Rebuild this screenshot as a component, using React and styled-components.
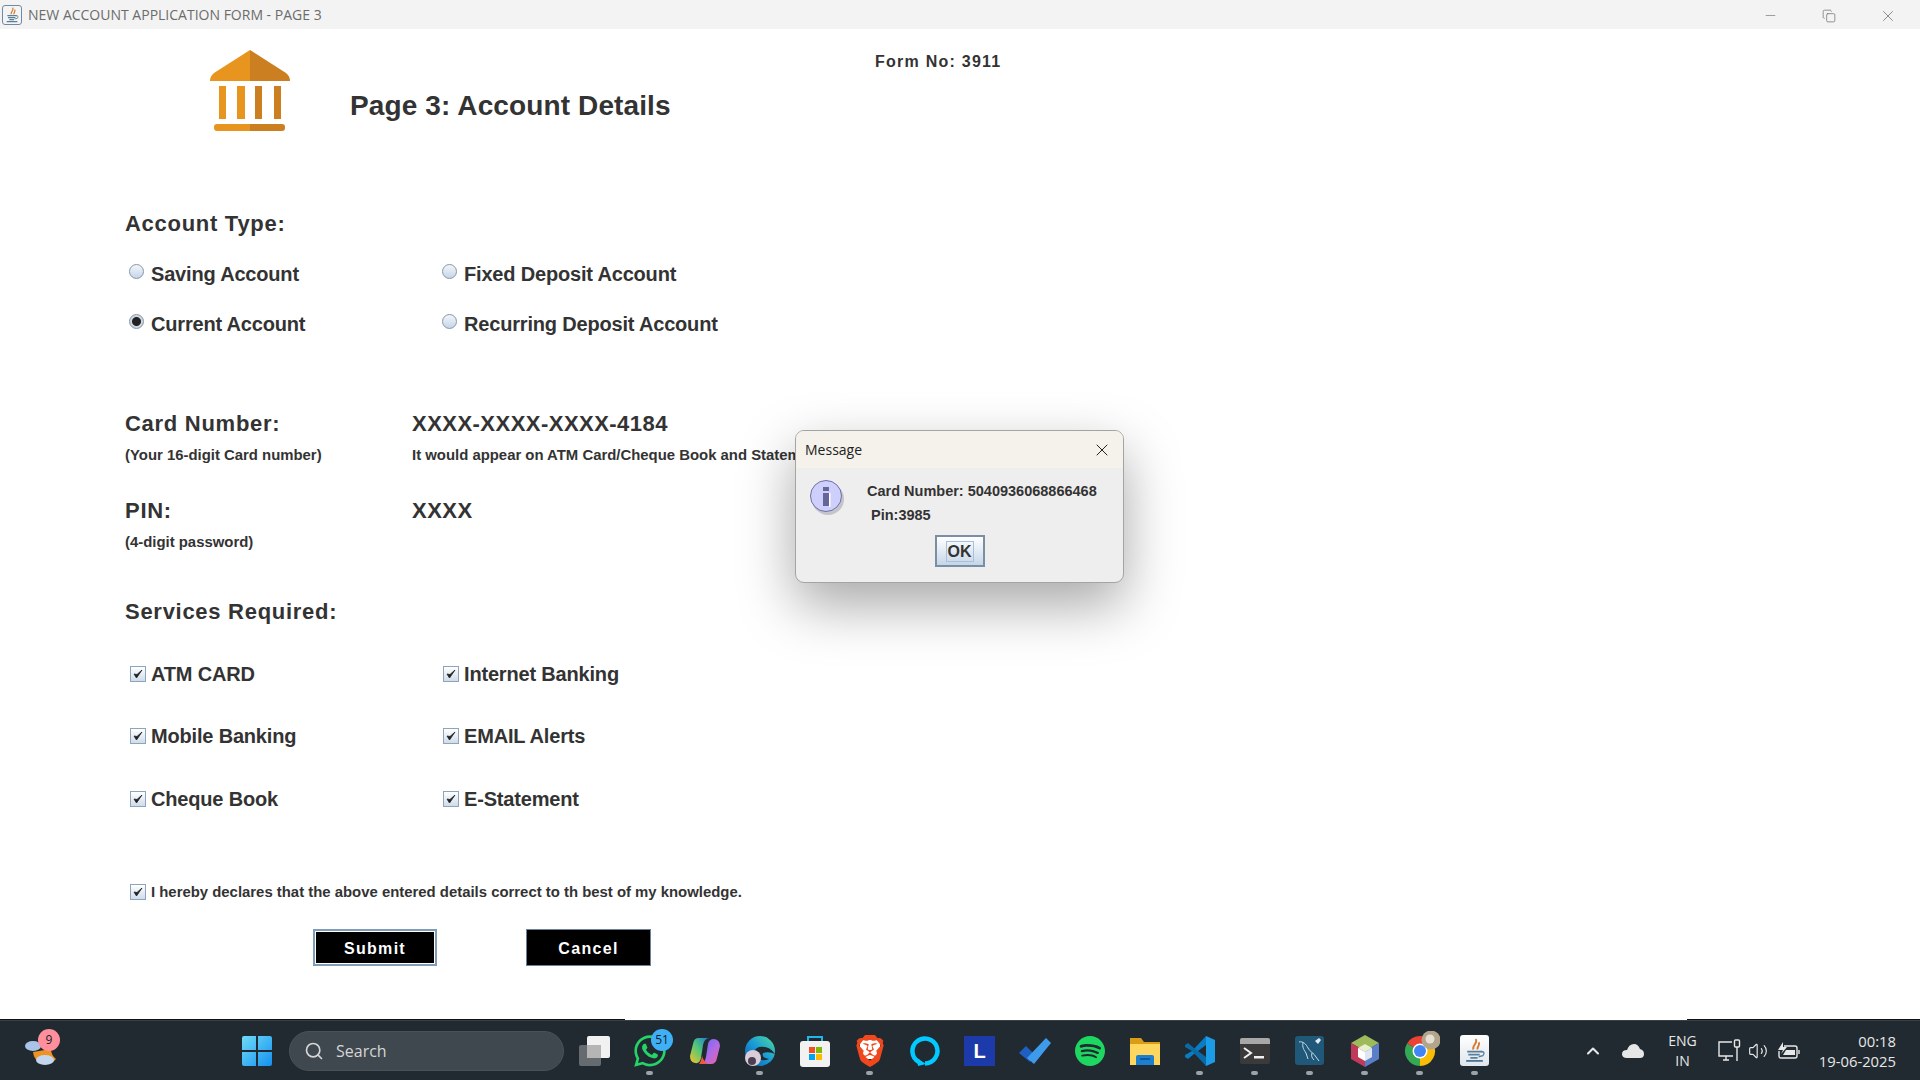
import styled, { createGlobalStyle } from "styled-components";
import { Search, Minus, Copy, X, ChevronUp, Volume2 } from "lucide-react";
import { FaWhatsapp } from "react-icons/fa";
import { SiBrave, SiSpotify } from "react-icons/si";

const GlobalStyle = createGlobalStyle`
  html, body {
    margin: 0;
    padding: 0;
    background: #ffffff;
  }
  * {
    box-sizing: border-box;
  }
`;

const Screen = styled.div`
  position: relative;
  width: 1920px;
  height: 1080px;
  display: flex;
  flex-direction: column;
  overflow: hidden;
  font-family: "Liberation Sans", Arial, sans-serif;
  color: #333333;
`;

const TitleBar = styled.div`
  height: 29px;
  flex: none;
  background: #f3f3f3;
  display: flex;
  align-items: center;
  padding-left: 2px;
  color: #6b6b6b;
  font-family: "Open Sans", sans-serif;
  font-size: 14px;
`;

const AppIcon = styled.span`
  width: 20px;
  height: 20px;
  margin-right: 6px;
  border: 1px solid #6f8aa3;
  border-radius: 3px;
  background: #f4f4f4;
  display: flex;
  align-items: center;
  justify-content: center;
`;

const WindowButtons = styled.div`
  margin-left: auto;
  padding-right: 3px;
  display: flex;
  align-items: center;
  color: #6a6a6a;
`;

const WindowButton = styled.span`
  width: 58.5px;
  padding-top: 2px;
  display: flex;
  justify-content: center;
`;

const Page = styled.div`
  flex: 1;
  background: linear-gradient(90deg, #111111 625px, transparent 625px, transparent 1687px, #111111 1687px) bottom / 100% 1px no-repeat #ffffff;
`;

const Header = styled.header`
  height: 150px;
  padding-left: 210px;
  display: grid;
  grid-template-columns: 140px 525px auto;
`;

const Logo = styled.svg`
  width: 80px;
  height: 82px;
  margin-top: 21px;
`;

const PageTitle = styled.h1`
  margin: 58px 0 0;
  font-size: 28px;
  line-height: 38px;
  font-weight: 700;
  letter-spacing: 0.12px;
`;

const FormNo = styled.div`
  margin-top: 23px;
  font-size: 16px;
  line-height: 20px;
  font-weight: 700;
  letter-spacing: 1.25px;
`;

const Form = styled.div`
  padding-left: 125px;
  padding-top: 30px;
`;

const Heading = styled.h2`
  margin: ${(p) => p.$top || 0}px 0 0;
  font-size: 22px;
  line-height: 30px;
  font-weight: 700;
  letter-spacing: 0.72px;
`;

const OptionGrid = styled.div`
  margin-top: ${(p) => p.$top}px;
  display: grid;
  grid-template-columns: 313px 400px;
  row-gap: ${(p) => p.$gap}px;
`;

const Option = styled.div`
  height: 30px;
  padding-left: 3px;
  display: flex;
  align-items: center;
  font-size: ${(p) => p.$size || 20}px;
  font-weight: 700;
  letter-spacing: ${(p) => (p.$size ? 0 : -0.18)}px;
  white-space: nowrap;
`;

const Radio = styled.span`
  width: 15px;
  height: 15px;
  margin: -5px 7px 0 1px;
  flex: none;
  border: 1px solid #8397ab;
  border-radius: 50%;
  background: ${(p) =>
    p.$checked
      ? "radial-gradient(circle, #222222 0 4px, #cfd6de 5px)"
      : "linear-gradient(#f4f6f9, #c5d5e8)"};
`;

const Check = styled.span`
  width: 16px;
  height: 16px;
  margin: -1px 5px 0 2px;
  flex: none;
  border: 1px solid #8ea4ba;
  background: linear-gradient(#ffffff, #cfdcea);
  display: flex;
  align-items: center;
  justify-content: center;
`;

const DetailRow = styled.div`
  margin-top: ${(p) => p.$top}px;
  display: grid;
  grid-template-columns: 287px 1fr;
`;

const Value = styled.div`
  font-size: 22px;
  line-height: 30px;
  font-weight: 700;
  letter-spacing: 0.47px;
`;

const Hint = styled.div`
  margin-top: 6px;
  font-size: 14.9px;
  line-height: 20px;
  font-weight: 700;
  white-space: nowrap;
`;

const Actions = styled.div`
  margin-top: 22px;
  padding-left: 188px;
  display: flex;
  gap: 89px;
`;

const FormButton = styled.button`
  width: ${(p) => p.$width}px;
  height: 37px;
  padding: 3px 0 0;
  background: #000000;
  color: #ffffff;
  border: ${(p) => (p.$focused ? "2px solid #7f9db9" : "1px solid #6d8299")};
  box-shadow: ${(p) => (p.$focused ? "inset 0 0 0 1px #ffffff" : "none")};
  font-family: inherit;
  font-size: 16px;
  font-weight: 700;
  letter-spacing: 1.3px;
`;

const Dialog = styled.div`
  position: absolute;
  left: 795px;
  top: 430px;
  width: 329px;
  height: 153px;
  border: 1px solid #a4a4a4;
  border-radius: 9px;
  overflow: hidden;
  background: #eeeeee;
  box-shadow: 0 22px 55px rgba(0, 0, 0, 0.35);
`;

const DialogHead = styled.div`
  height: 37px;
  padding: 0 11px 0 9px;
  background: #f5f1eb;
  display: flex;
  align-items: center;
  justify-content: space-between;
  font-family: "Open Sans", sans-serif;
  font-size: 14px;
  color: #222222;
`;

const DialogBody = styled.div`
  display: flex;
  padding: 11px 0 0 14px;
`;

const InfoIcon = styled.svg`
  width: 36px;
  height: 40px;
  flex: none;
`;

const Message = styled.div`
  margin-left: 21px;
  font-size: 14.5px;
  font-weight: 700;
  line-height: 24px;
  white-space: pre;
`;

const OkRow = styled.div`
  display: flex;
  justify-content: center;
  margin-top: 8px;
`;

const OkButton = styled.button`
  width: 50px;
  height: 32px;
  padding: 1px 0 0;
  border: 2px solid #7b8ea3;
  background: linear-gradient(#ffffff, #c5d6e8);
  font-family: inherit;
  font-size: 16px;
  font-weight: 700;
  color: #333333;
`;

const OkLabel = styled.span`
  padding: 1px 1px;
  border: 1px solid #a9c0d8;
`;

const Taskbar = styled.footer`
  height: 60px;
  flex: none;
  background: #202a30;
  border-top: 1px solid #3a4247;
  display: flex;
  align-items: center;
  padding-left: 14px;
  color: #e8e8e8;
`;

const Slot = styled.div`
  position: relative;
  width: 55px;
  height: 59px;
  flex: none;
  margin-left: ${(p) => p.$left || 0}px;
  display: flex;
  align-items: center;
  justify-content: center;

  &::after {
    content: "";
    display: ${(p) => (p.$running ? "block" : "none")};
    position: absolute;
    left: 24px;
    bottom: 5px;
    width: 7px;
    height: 4px;
    border-radius: 2px;
    background: #9aa3a8;
  }
`;

const Badge = styled.span`
  position: absolute;
  left: ${(p) => p.$left}px;
  top: 8px;
  width: 22px;
  height: 22px;
  border-radius: 50%;
  background: ${(p) => p.$bg};
  color: #10222e;
  font-family: "Open Sans", sans-serif;
  font-size: 12px;
  line-height: 22px;
  text-align: center;
`;

const SearchBox = styled.div`
  width: 275px;
  height: 40px;
  flex: none;
  margin: 0 3px 0 5px;
  padding-left: 14px;
  border-radius: 20px;
  background: #3f484f;
  border: 1px solid #4a5258;
  display: flex;
  align-items: center;
  gap: 12px;
  color: #d5d5d5;
  font-family: "Open Sans", sans-serif;
  font-size: 16px;
`;

const LetterTile = styled.span`
  width: 31px;
  height: 30px;
  background: #1c3aa9;
  color: #ffffff;
  font-size: 20px;
  font-weight: 700;
  line-height: 30px;
  text-align: center;
`;

const Tray = styled.div`
  margin-left: auto;
  padding-right: 24px;
  display: flex;
  align-items: center;
  font-family: "Open Sans", sans-serif;
  font-size: 14px;
  line-height: 20px;
`;

const TrayItem = styled.span`
  margin-left: ${(p) => p.$left}px;
  display: flex;
  align-items: center;
`;

const Lang = styled.div`
  margin-left: 24px;
  text-align: center;
`;

const Clock = styled.div`
  margin-left: 19px;
  font-size: 14.8px;
  text-align: right;
`;

const BankLogo = () => (
  <Logo viewBox="0 0 80 82">
    <path d="M40 0 L4 23 Q0 26 0 31 H40 Z" fill="#e8951f" />
    <path d="M40 0 L76 23 Q80 26 80 31 H40 Z" fill="#cb7f20" />
    <rect x="9" y="36" width="7" height="33" fill="#e8951f" />
    <rect x="27" y="36" width="8" height="33" fill="#e8951f" />
    <rect x="45" y="36" width="7" height="33" fill="#cb7f20" />
    <rect x="64" y="36" width="7" height="33" fill="#cb7f20" />
    <path d="M7 74 H40 V81 H7 Q4 81 4 78 V77 Q4 74 7 74 Z" fill="#e8951f" />
    <path d="M40 74 H72 Q75 74 75 77 V78 Q75 81 72 81 H40 Z" fill="#cb7f20" />
  </Logo>
);

const CheckBox = () => (
  <Check>
    <svg width="10" height="10" viewBox="0 0 10 10">
      <path d="M1 5 L3.5 9 L9 1 L4 5.5 Z" fill="#222222" stroke="#222222" strokeWidth="0.8" />
    </svg>
  </Check>
);

const JavaGlyph = ({ size }) => (
  <svg width={size} height={size} viewBox="0 0 24 24" fill="none">
    <path d="M13 1 C16 5 9 7 11 11 M16 4 C18 7 14 8 15 11" stroke="#d9782b" strokeWidth="1.8" />
    <path d="M5 13 H19 M6 16 H17 M8 19 H15" stroke="#5a7f9c" strokeWidth="1.7" />
    <path d="M18 13 Q23 13 20 17 L16 18" stroke="#5a7f9c" strokeWidth="1.3" />
    <path d="M4 22 H20" stroke="#3f6a8a" strokeWidth="1.6" />
  </svg>
);

const WeatherIcon = () => (
  <svg width="34" height="36" viewBox="0 0 34 36">
    <path d="M8 19 A13 13 0 0 0 31 26 A13 13 0 0 1 26 16 Z" fill="#ef9320" />
    <ellipse cx="8" cy="13" rx="8" ry="5" fill="#a9c4e6" />
    <ellipse cx="20" cy="27" rx="9" ry="5" fill="#c3d6ee" />
  </svg>
);

const WindowsIcon = () => (
  <svg width="30" height="30" viewBox="0 0 30 30">
    <defs>
      <linearGradient id="win" x1="0" y1="0" x2="1" y2="1">
        <stop offset="0" stopColor="#6fdcf8" />
        <stop offset="1" stopColor="#1490f0" />
      </linearGradient>
    </defs>
    <path d="M0 2 Q0 0 2 0 H14 V14 H0 Z M16 0 H28 Q30 0 30 2 V14 H16 Z M0 16 H14 V30 H2 Q0 30 0 28 Z M16 16 H30 V28 Q30 30 28 30 H16 Z" fill="url(#win)" />
  </svg>
);

const TaskViewIcon = () => (
  <svg width="32" height="30" viewBox="0 0 32 30">
    <rect x="0" y="9" width="22" height="21" rx="2" fill="#666b6f" />
    <rect x="8" y="0" width="23" height="22" rx="2" fill="#f1f1f1" />
    <rect x="8" y="9" width="14" height="13" fill="#b5b5b5" />
  </svg>
);

const CopilotIcon = () => (
  <svg width="30" height="28" viewBox="0 0 30 28">
    <defs>
      <linearGradient id="copL" x1="0" y1="1" x2="1" y2="0">
        <stop offset="0" stopColor="#f7c325" />
        <stop offset="0.5" stopColor="#52c878" />
        <stop offset="1" stopColor="#1d78d8" />
      </linearGradient>
      <linearGradient id="copR" x1="0" y1="0" x2="1" y2="1">
        <stop offset="0" stopColor="#5a6cf0" />
        <stop offset="0.55" stopColor="#b06ae8" />
        <stop offset="1" stopColor="#f0609a" />
      </linearGradient>
    </defs>
    <path d="M8 1 H19 Q14 2 13 8 L11 21 Q10 27 5 26 Q0 25 0 19 L3 7 Q4 1 8 1 Z" fill="url(#copL)" />
    <path d="M21 27 H10 Q15 26 16 20 L18 7 Q19 2 24 2 Q30 3 30 9 L27 21 Q26 27 21 27 Z" fill="url(#copR)" />
    <path d="M9 27 H18 Q14 25 12 19 Q11 25 9 27 Z" fill="#ef5a3c" />
  </svg>
);

const EdgeIcon = () => (
  <svg width="32" height="32" viewBox="0 0 32 32">
    <defs>
      <linearGradient id="edge" x1="1" y1="0" x2="0" y2="1">
        <stop offset="0" stopColor="#4fdc9a" />
        <stop offset="0.5" stopColor="#1a9ad8" />
        <stop offset="1" stopColor="#0a56a8" />
      </linearGradient>
    </defs>
    <circle cx="16" cy="16" r="15" fill="url(#edge)" />
    <path d="M31 19 Q25 10 15 12 Q9 14 11 20 Q16 28 25 24 Q17 23 19 18 Q25 16 31 19 Z" fill="#202a30" />
    <circle cx="9" cy="23" r="8" fill="#d8cdd8" />
    <circle cx="8" cy="26" r="4" fill="#4c3f55" />
  </svg>
);

const StoreIcon = () => (
  <svg width="30" height="32" viewBox="0 0 30 32">
    <path d="M8 7 V2 H22 V7" fill="none" stroke="#22b5e8" strokeWidth="2" />
    <rect x="0" y="6" width="30" height="26" rx="3" fill="#f2f2f2" />
    <rect x="9" y="12" width="6" height="6" fill="#f25022" />
    <rect x="16" y="12" width="6" height="6" fill="#7fba00" />
    <rect x="9" y="19" width="6" height="6" fill="#00a4ef" />
    <rect x="16" y="19" width="6" height="6" fill="#ffb900" />
  </svg>
);

const AlexaIcon = () => (
  <svg width="30" height="30" viewBox="0 0 30 30">
    <path d="M9 26 A12.5 12.5 0 1 1 15 27.5" fill="none" stroke="#00caff" strokeWidth="4.5" />
    <path d="M7 22 L8 30 L16 28 Z" fill="#00caff" />
  </svg>
);

const TodoIcon = () => (
  <svg width="32" height="26" viewBox="0 0 32 26">
    <path d="M0 15 L7 8 L15 16 L11 24 Z" fill="#1f5fc4" />
    <path d="M27 0 L32 5 L15 26 L8 20 Z" fill="#3e9bec" />
  </svg>
);

const FolderIcon = () => (
  <svg width="32" height="30" viewBox="0 0 32 30">
    <path d="M1 2 H12 L15 6 H31 V28 H1 Z" fill="#d99e16" />
    <rect x="1" y="8" width="30" height="21" fill="#ffd75e" />
    <path d="M7 29 V21 Q7 19 9 19 H23 Q25 19 25 21 V29 Z" fill="#1c7fd0" />
    <rect x="11" y="22" width="10" height="2" fill="#0e5aa0" />
  </svg>
);

const VsCodeIcon = () => (
  <svg width="30" height="30" viewBox="0 0 30 30">
    <path d="M21 0 L30 4 V26 L21 30 Z" fill="#1c9be6" />
    <path d="M21 0 V9 L9 18 L3 23 L0 21 V19 L7 15 Z" fill="#0a7cc4" />
    <path d="M21 30 V21 L9 12 L3 7 L0 9 V11 L7 15 Z" fill="#0a6aa8" />
  </svg>
);

const TerminalIcon = () => (
  <svg width="30" height="26" viewBox="0 0 30 26">
    <rect width="30" height="26" rx="2" fill="#3a3a3a" />
    <path d="M0 6 V2 Q0 0 2 0 H28 Q30 0 30 2 V6 Z" fill="#a8a8a8" />
    <path d="M4 10 L11 15 L4 20" fill="none" stroke="#f0f0f0" strokeWidth="2" />
    <rect x="14" y="18" width="10" height="2.5" fill="#f0f0f0" />
  </svg>
);

const MysqlIcon = () => (
  <svg width="29" height="29" viewBox="0 0 29 29">
    <rect width="29" height="29" rx="3" fill="#1f5878" />
    <path d="M4 6 C8 5 11 8 13 12 C15 16 19 17 21 21 L24 25 M8 7 C7 11 9 14 11 17 C12 19 12 21 13 23 M17 17 C16 20 17 22 19 24" fill="none" stroke="#c8dae6" strokeWidth="1" />
    <path d="M20 5 L24 2 L26 4 L23 8 Z" fill="#e4edf3" />
  </svg>
);

const HexIcon = () => (
  <svg width="28" height="32" viewBox="0 0 28 32">
    <path d="M14 0 L28 8 L14 16 L0 8 Z" fill="#9dbb5a" />
    <path d="M0 8 L14 16 V32 L0 24 Z" fill="#c23a5a" />
    <path d="M28 8 L14 16 V32 L28 24 Z" fill="#5a7fc8" />
    <path d="M14 9 L21 13 L14 17 L7 13 Z" fill="#e8f0d0" />
    <path d="M7 13 L14 17 V26 L7 22 Z" fill="#ffffff" />
    <path d="M21 13 L14 17 V26 L21 22 Z" fill="#dfe6f2" />
  </svg>
);

const ChromeIcon = () => (
  <svg width="40" height="40" viewBox="0 0 40 40">
    <path d="M20 20 L7 12.5 A15 15 0 0 1 33 12.5 Z" fill="#ea4335" />
    <path d="M20 20 L33 12.5 A15 15 0 0 1 20 35 Z" fill="#fbbc05" />
    <path d="M20 20 L20 35 A15 15 0 0 1 7 12.5 Z" fill="#34a853" />
    <circle cx="20" cy="20" r="7.5" fill="#ffffff" />
    <circle cx="20" cy="20" r="6" fill="#4285f4" />
    <circle cx="31" cy="9" r="9.5" fill="#b3a58c" />
    <circle cx="30" cy="8" r="4.5" fill="#e6e0d4" />
  </svg>
);

const JavaTile = styled.span`
  width: 29px;
  height: 31px;
  border-radius: 3px;
  background: linear-gradient(#ffffff, #dfe6ec);
  display: flex;
  align-items: center;
  justify-content: center;
`;

const BraveTile = styled.span`
  position: relative;
  display: flex;
  color: #f1471d;
  font-size: 32px;

  &::before {
    content: "";
    position: absolute;
    inset: 5px 6px 8px;
    background: #ffffff;
  }
  & > svg {
    position: relative;
  }
`;

const NetworkIcon = () => (
  <svg width="24" height="24" viewBox="0 0 24 24" fill="none" stroke="#e8e8e8" strokeWidth="1.4">
    <path d="M15 3 H2 V17 H16" />
    <path d="M6 21 H12 M9 17 V21" />
    <rect x="17.5" y="1" width="5" height="7" rx="1" />
    <path d="M20 8 V22" />
  </svg>
);

const BatteryIcon = () => (
  <svg width="24" height="20" viewBox="0 0 24 20" fill="none" stroke="#e8e8e8" strokeWidth="1.4">
    <path d="M8 5 H19 Q21 5 21 7 V15 Q21 17 19 17 H5 Q3 17 3 15 V10" />
    <path d="M23 9 V13" />
    <path d="M7 1 L2 9 H7 L5 13 L11 6 H7 Z" fill="#e8e8e8" stroke="none" />
    <path d="M7 14 L10 9 H19 V14 Z" fill="#e8e8e8" stroke="none" />
  </svg>
);

const OneDriveIcon = () => (
  <svg width="22" height="15" viewBox="0 0 22 15">
    <path d="M5 15 Q0 15 0 11 Q0 7 5 7 Q7 1 12 1 Q16 1 18 6 Q22 7 22 11 Q22 15 18 15 Z" fill="#e6e6e6" />
  </svg>
);

const App = () => {
  return (
    <Screen>
      <GlobalStyle />
      <TitleBar>
        <AppIcon>
          <JavaGlyph size={16} />
        </AppIcon>
        NEW ACCOUNT APPLICATION FORM - PAGE 3
        <WindowButtons>
          <WindowButton>
            <Minus size={15} strokeWidth={1} />
          </WindowButton>
          <WindowButton>
            <Copy size={14} strokeWidth={1.2} />
          </WindowButton>
          <WindowButton>
            <X size={18} strokeWidth={1} />
          </WindowButton>
        </WindowButtons>
      </TitleBar>

      <Page>
        <Header>
          <BankLogo />
          <PageTitle>Page 3: Account Details</PageTitle>
          <FormNo>Form No: 3911</FormNo>
        </Header>

        <Form>
          <Heading>Account Type:</Heading>
          <OptionGrid $top={20} $gap={20}>
            <Option>
              <Radio />
              Saving Account
            </Option>
            <Option>
              <Radio />
              Fixed Deposit Account
            </Option>
            <Option>
              <Radio $checked />
              Current Account
            </Option>
            <Option>
              <Radio />
              Recurring Deposit Account
            </Option>
          </OptionGrid>

          <DetailRow $top={70}>
            <Heading>Card Number:</Heading>
            <Value>XXXX-XXXX-XXXX-4184</Value>
            <Hint>(Your 16-digit Card number)</Hint>
            <Hint>It would appear on ATM Card/Cheque Book and Statements</Hint>
          </DetailRow>

          <DetailRow $top={31}>
            <Heading>PIN:</Heading>
            <Value>XXXX</Value>
            <Hint>(4-digit password)</Hint>
          </DetailRow>

          <Heading $top={45}>Services Required:</Heading>
          <OptionGrid $top={32} $gap={32.5}>
            <Option>
              <CheckBox />
              ATM CARD
            </Option>
            <Option>
              <CheckBox />
              Internet Banking
            </Option>
            <Option>
              <CheckBox />
              Mobile Banking
            </Option>
            <Option>
              <CheckBox />
              EMAIL Alerts
            </Option>
            <Option>
              <CheckBox />
              Cheque Book
            </Option>
            <Option>
              <CheckBox />
              E-Statement
            </Option>
          </OptionGrid>

          <OptionGrid $top={63} $gap={0}>
            <Option $size={14.9}>
              <CheckBox />I hereby declares that the above entered details correct to th best of my knowledge.
            </Option>
          </OptionGrid>

          <Actions>
            <FormButton $width={124} $focused>
              Submit
            </FormButton>
            <FormButton $width={125}>Cancel</FormButton>
          </Actions>
        </Form>
      </Page>

      <Dialog>
        <DialogHead>
          Message
          <X size={20} strokeWidth={1.2} />
        </DialogHead>
        <DialogBody>
          <InfoIcon viewBox="0 0 36 40">
            <circle cx="18" cy="20" r="16" fill="#9a9aa8" opacity="0.5" />
            <circle cx="16" cy="17" r="15.5" fill="#cfcffb" stroke="#6f6fa8" />
            <rect x="13" y="8" width="6" height="4" fill="#66669a" />
            <rect x="13" y="14" width="6" height="13" fill="#66669a" />
            <rect x="19" y="14" width="1.5" height="14" fill="#ffffff" />
          </InfoIcon>
          <Message>{"Card Number: 5040936068866468\n Pin:3985"}</Message>
        </DialogBody>
        <OkRow>
          <OkButton>
            <OkLabel>OK</OkLabel>
          </OkButton>
        </OkRow>
      </Dialog>

      <Taskbar>
        <Slot>
          <WeatherIcon />
          <Badge $left={24} $bg="#ff8f9b">
            9
          </Badge>
        </Slot>
        <Slot $left={160}>
          <WindowsIcon />
        </Slot>
        <SearchBox>
          <Search size={20} />
          Search
        </SearchBox>
        <Slot>
          <TaskViewIcon />
        </Slot>
        <Slot $running>
          <FaWhatsapp size={36} color="#25d366" />
          <Badge $left={29} $bg="#3fb0f5">
            51
          </Badge>
        </Slot>
        <Slot>
          <CopilotIcon />
        </Slot>
        <Slot $running>
          <EdgeIcon />
        </Slot>
        <Slot>
          <StoreIcon />
        </Slot>
        <Slot $running>
          <BraveTile>
            <SiBrave />
          </BraveTile>
        </Slot>
        <Slot>
          <AlexaIcon />
        </Slot>
        <Slot>
          <LetterTile>L</LetterTile>
        </Slot>
        <Slot>
          <TodoIcon />
        </Slot>
        <Slot>
          <SiSpotify size={30} color="#1ed760" />
        </Slot>
        <Slot>
          <FolderIcon />
        </Slot>
        <Slot $running>
          <VsCodeIcon />
        </Slot>
        <Slot $running>
          <TerminalIcon />
        </Slot>
        <Slot $running>
          <MysqlIcon />
        </Slot>
        <Slot $running>
          <HexIcon />
        </Slot>
        <Slot $running>
          <ChromeIcon />
        </Slot>
        <Slot $running>
          <JavaTile>
            <JavaGlyph size={25} />
          </JavaTile>
        </Slot>

        <Tray>
          <TrayItem $left={0}>
            <ChevronUp size={20} strokeWidth={2.5} />
          </TrayItem>
          <TrayItem $left={19}>
            <OneDriveIcon />
          </TrayItem>
          <Lang>
            ENG
            <br />
            IN
          </Lang>
          <TrayItem $left={20}>
            <NetworkIcon />
          </TrayItem>
          <TrayItem $left={7}>
            <Volume2 size={20} strokeWidth={1.4} />
          </TrayItem>
          <TrayItem $left={8}>
            <BatteryIcon />
          </TrayItem>
          <Clock>
            00:18
            <br />
            19-06-2025
          </Clock>
        </Tray>
      </Taskbar>
    </Screen>
  );
};

export default App;
